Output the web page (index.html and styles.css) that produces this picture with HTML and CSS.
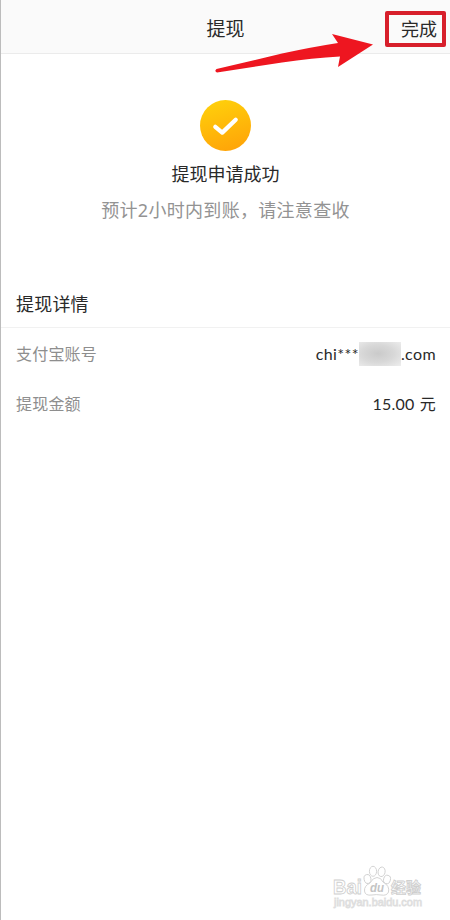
FILE: index.html
```html
<!DOCTYPE html>
<html lang="zh-CN">

<head>
  <meta charset="UTF-8">
  <title>提现</title>
  <link rel="stylesheet" href="styles.css">
</head>

<body>
  <header class="header">
    <h1 class="title">提现</h1>
    <a class="done-btn" href="#">完成</a>
    <svg class="arrow" width="160" height="42" viewBox="0 0 160 42">
      <path d="M2.5 35 L68 19.5 Q98 13 124 9 L118 0 L159 10.5 L124 33 L126 22.5 Q98 24 68 28.5 L3 38.5 Q0 37 2.5 35Z" fill="#ee1620" />
    </svg>
  </header>

  <!-- Result -->
  <div class="result">
    <svg class="result-icon" width="51" height="51" viewBox="0 0 50 50">
      <defs>
        <linearGradient id="gold" x1="0.35" y1="0" x2="0.65" y2="1">
          <stop offset="0" stop-color="#ffcf0b" />
          <stop offset="1" stop-color="#ffa408" />
        </linearGradient>
      </defs>
      <circle cx="25" cy="25" r="25" fill="url(#gold)" />
      <path d="M15 26.3 L21.8 32 L35 19.4" fill="none" stroke="#fff" stroke-width="4.2" stroke-linecap="round" stroke-linejoin="round" />
    </svg>
    <p class="result-text">提现申请成功</p>
    <p class="result-hint">预计2小时内到账，请注意查收</p>
  </div>

  <!-- Details -->
  <div class="details">
    <h2 class="details-title">提现详情</h2>
    <div class="row">
      <span class="label">支付宝账号</span>
      <span class="value"><span>chi</span><span class="stars">***</span><i class="mask"></i><span>.com</span></span>
    </div>
    <div class="row">
      <span class="label">提现金额</span>
      <span class="value amount">15.00 元</span>
    </div>
  </div>

  <svg class="watermark" width="96" height="48" viewBox="0 0 96 48">
    <g fill="#fff" stroke="#cfcfcf" stroke-width="0.9">
      <text class="wm-name" x="2" y="30" textLength="29" lengthAdjust="spacingAndGlyphs">Bai</text>
      <ellipse cx="36.5" cy="15" rx="3.4" ry="4.5" transform="rotate(-12 36.5 15)" />
      <ellipse cx="42" cy="7.3" rx="3.6" ry="5" />
      <ellipse cx="50.6" cy="7.8" rx="3.5" ry="4.8" transform="rotate(10 50.6 7.8)" />
      <ellipse cx="56" cy="15.5" rx="3.4" ry="4.3" transform="rotate(15 56 15.5)" />
      <path d="M46 13.5 Q50 13.5 52 18 Q59 22 57.5 28 Q56 32 50 31 Q45 30.2 41 31 Q34 32 33.5 27 Q33 22 39 19 Q42 13.5 46 13.5Z" />
      <text class="wm-cn" x="60" y="29" textLength="30" lengthAdjust="spacingAndGlyphs">经验</text>
    </g>
    <text class="wm-du" x="39" y="28" textLength="14" lengthAdjust="spacingAndGlyphs">du</text>
    <text class="wm-url" x="3" y="42" textLength="88" lengthAdjust="spacingAndGlyphs">jingyan.baidu.com</text>
  </svg>
</body>

</html>
```
FILE: styles.css
```css
* {
  box-sizing: border-box;
}

body {
  margin: 0;
  height: 920px;
  overflow: hidden;
  border-left: 1px solid #bcbcbc;
  background-color: #fff;
  color: #292929;
  font-family: "Noto Sans", "Noto Sans CJK SC", sans-serif;
}

h1,
h2,
p {
  margin: 0;
  font-weight: 400;
}

.header {
  position: relative;
  display: flex;
  justify-content: center;
  height: 54px;
  padding-top: 15px;
  background-color: #fafafa;
  border-bottom: 1px solid #ebebeb;
}

.title {
  font-size: 19px;
  line-height: 28px;
}

.done-btn {
  position: absolute;
  top: 11px;
  right: 4px;
  width: 61px;
  height: 36px;
  padding-left: 12px;
  border: 4px solid #d71f2b;
  border-radius: 2px;
  color: #292929;
  font-size: 18px;
  line-height: 29px;
  text-decoration: none;
  white-space: nowrap;
}

.arrow {
  position: absolute;
  top: 34px;
  left: 213px;
}

.result {
  display: flex;
  flex-direction: column;
  align-items: center;
  height: 226px;
  padding-top: 46px;
}

.result-icon {
  display: block;
}

.result-text {
  margin-top: 10px;
  font-size: 18px;
  line-height: 26px;
}

.result-hint {
  margin-top: 10px;
  color: #939393;
  font-size: 18px;
  line-height: 26px;
  letter-spacing: 0.3px;
}

.details-title {
  height: 48px;
  padding-left: 15px;
  border-bottom: 1px solid #f1f1f1;
  font-size: 18px;
  line-height: 48px;
  letter-spacing: 0.2px;
}

.row {
  display: flex;
  justify-content: space-between;
  align-items: center;
  height: 50px;
  padding: 0 14px 0 15px;
}

.label {
  color: #8e8e8e;
  font-size: 16px;
  letter-spacing: 0.2px;
}

.value {
  display: flex;
  align-items: center;
  font-family: Lato, "Noto Sans CJK SC", sans-serif;
  font-size: 16px;
  letter-spacing: 0.4px;
}

.mask {
  width: 42px;
  height: 24px;
  margin-top: 2px;
  background: radial-gradient(ellipse at 45% 48%, #cacaca 0%, #d8d8d8 50%, #eee 100%);
}

.amount {
  letter-spacing: 0.2px;
  word-spacing: 1px;
}

.watermark {
  position: absolute;
  left: 331px;
  top: 864px;
}

.wm-name {
  font: bold 21px "Liberation Sans", sans-serif;
}

.wm-cn {
  font: bold 15px "Noto Sans CJK SC", sans-serif;
}

.wm-du {
  fill: #c4c4c4;
  font: italic bold 13px "Liberation Sans", sans-serif;
}

.wm-url {
  fill: #fff;
  stroke: #dedede;
  stroke-width: 0.8;
  font: 10px "Liberation Sans", sans-serif;
}
```
